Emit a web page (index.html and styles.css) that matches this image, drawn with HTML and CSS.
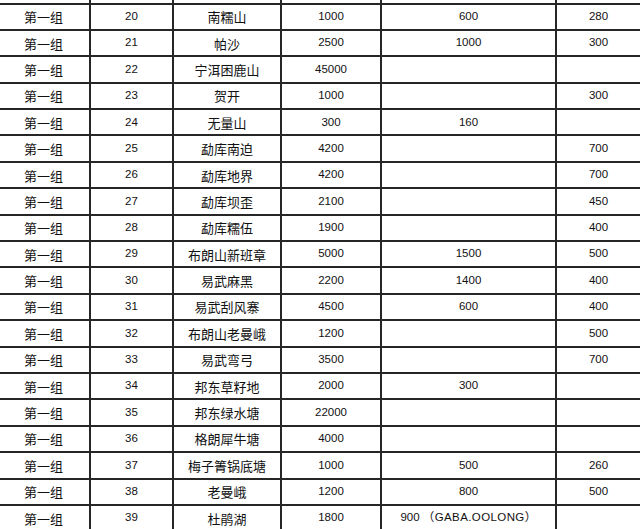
FILE: index.html
```html
<!DOCTYPE html>
<html lang="zh-CN">
<head>
<meta charset="utf-8">
<link rel="stylesheet" href="styles.css">
</head>
<body>
<div class="frame">
<table class="grid">
<colgroup>
<col class="c1"><col class="c2"><col class="c3"><col class="c4"><col class="c5"><col class="c6">
</colgroup>
<tbody>
<tr class="ghost"><td></td><td></td><td></td><td></td><td></td><td></td></tr>
<tr><td>第一组</td><td class="n">20</td><td>南糯山</td><td class="n">1000</td><td class="n">600</td><td class="n">280</td></tr>
<tr><td>第一组</td><td class="n">21</td><td>帕沙</td><td class="n">2500</td><td class="n">1000</td><td class="n">300</td></tr>
<tr><td>第一组</td><td class="n">22</td><td>宁洱困鹿山</td><td class="n">45000</td><td></td><td></td></tr>
<tr><td>第一组</td><td class="n">23</td><td>贺开</td><td class="n">1000</td><td></td><td class="n">300</td></tr>
<tr><td>第一组</td><td class="n">24</td><td>无量山</td><td class="n">300</td><td class="n">160</td><td></td></tr>
<tr><td>第一组</td><td class="n">25</td><td>勐库南迫</td><td class="n">4200</td><td></td><td class="n">700</td></tr>
<tr><td>第一组</td><td class="n">26</td><td>勐库地界</td><td class="n">4200</td><td></td><td class="n">700</td></tr>
<tr><td>第一组</td><td class="n">27</td><td>勐库坝歪</td><td class="n">2100</td><td></td><td class="n">450</td></tr>
<tr><td>第一组</td><td class="n">28</td><td>勐库糯伍</td><td class="n">1900</td><td></td><td class="n">400</td></tr>
<tr><td>第一组</td><td class="n">29</td><td>布朗山新班章</td><td class="n">5000</td><td class="n">1500</td><td class="n">500</td></tr>
<tr><td>第一组</td><td class="n">30</td><td>易武麻黑</td><td class="n">2200</td><td class="n">1400</td><td class="n">400</td></tr>
<tr><td>第一组</td><td class="n">31</td><td>易武刮风寨</td><td class="n">4500</td><td class="n">600</td><td class="n">400</td></tr>
<tr><td>第一组</td><td class="n">32</td><td>布朗山老曼峨</td><td class="n">1200</td><td></td><td class="n">500</td></tr>
<tr><td>第一组</td><td class="n">33</td><td>易武弯弓</td><td class="n">3500</td><td></td><td class="n">700</td></tr>
<tr><td>第一组</td><td class="n">34</td><td>邦东草籽地</td><td class="n">2000</td><td class="n">300</td><td></td></tr>
<tr><td>第一组</td><td class="n">35</td><td>邦东绿水塘</td><td class="n">22000</td><td></td><td></td></tr>
<tr><td>第一组</td><td class="n">36</td><td>格朗犀牛塘</td><td class="n">4000</td><td></td><td></td></tr>
<tr><td>第一组</td><td class="n">37</td><td>梅子箐锅底塘</td><td class="n">1000</td><td class="n">500</td><td class="n">260</td></tr>
<tr><td>第一组</td><td class="n">38</td><td>老曼峨</td><td class="n">1200</td><td class="n">800</td><td class="n">500</td></tr>
<tr><td>第一组</td><td class="n">39</td><td>杜鹃湖</td><td class="n">1800</td><td class="n">900 <span class="paren">（GABA.OOLONG）</span></td><td></td></tr>
</tbody>
</table>
</div>
</body>
</html>
```

FILE: styles.css
```css
html, body {
  margin: 0;
  padding: 0;
  background: #ffffff;
}

.frame {
  width: 640px;
  height: 529px;
  overflow: hidden;
}

.grid {
  border-collapse: collapse;
  table-layout: fixed;
  width: 644px;
  margin-left: -4px;
  margin-top: -23.9px;
  font-family: "Noto Sans CJK SC", "Liberation Sans", sans-serif;
  font-size: 13px;
  color: #111111;
}

.c1 { width: 93px; }
.c2 { width: 83px; }
.c3 { width: 108px; }
.c4 { width: 100px; }
.c5 { width: 175px; }
.c6 { width: 85px; }

.grid td {
  border: 2px solid #262626;
  height: 24.4px;
  padding: 0;
  text-align: center;
  vertical-align: middle;
  line-height: 1;
  white-space: nowrap;
}

.grid .n {
  font-family: "Liberation Sans", sans-serif;
  font-size: 11.5px;
}

.grid .n .paren {
  font-family: "Liberation Sans", "Noto Sans CJK SC", sans-serif;
  letter-spacing: 0.4px;
}
```
